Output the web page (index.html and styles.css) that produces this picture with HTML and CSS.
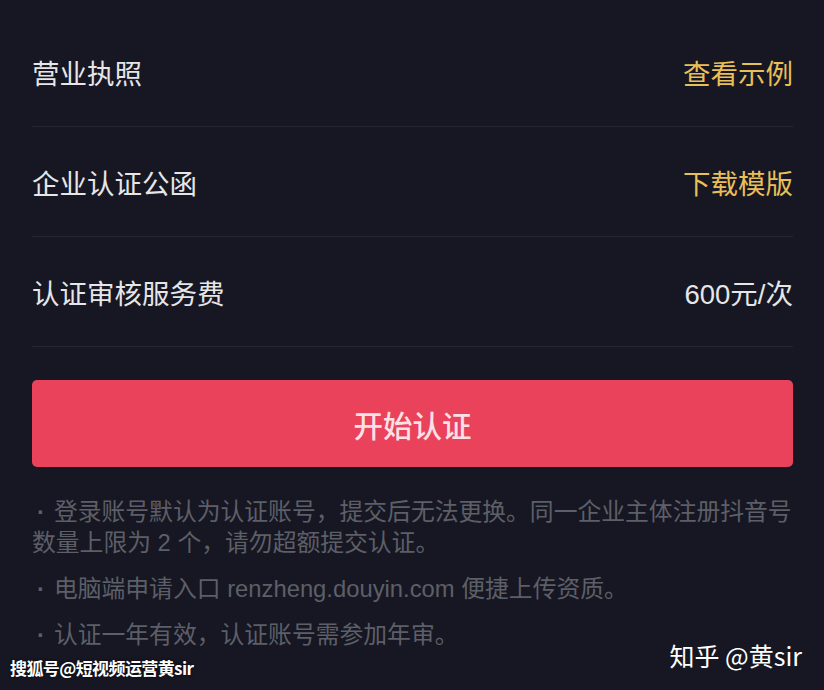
FILE: index.html
```html
<!DOCTYPE html>
<html>
<head>
    <meta charset="utf-8">
    <title>企业认证</title>
    <link rel="stylesheet" href="styles.css">
</head>
<body>
    <div class="page">
        <div class="row">
            <span class="label">营业执照</span>
            <span class="link">查看示例</span>
        </div>
        <div class="row">
            <span class="label">企业认证公函</span>
            <span class="link">下载模版</span>
        </div>
        <div class="row">
            <span class="label">认证审核服务费</span>
            <span class="value">600元/次</span>
        </div>

        <button class="start-btn">开始认证</button>

        <div class="notes">
            <p>登录账号默认为认证账号，提交后无法更换。同一企业主体注册抖音号数量上限为 2 个，请勿超额提交认证。</p>
            <p>电脑端申请入口 renzheng.douyin.com 便捷上传资质。</p>
            <p>认证一年有效，认证账号需参加年审。</p>
        </div>
    </div>

    <div class="mark-left">搜狐号@短视频运营黄sir</div>
    <div class="mark-right">知乎 @黄sir</div>
</body>
</html>
```

FILE: styles.css
```css
* {
    box-sizing: border-box;
    margin: 0;
    padding: 0;
}

body {
    font-family: "Liberation Sans", "Noto Sans CJK SC", sans-serif;
    background-color: #161722;
    color: #e6e6e9;
    width: 824px;
    height: 690px;
    overflow: hidden;
    position: relative;
}

.page {
    padding: 17px 31px 0 32px;
}

.row {
    display: flex;
    justify-content: space-between;
    align-items: center;
    height: 110px;
    border-bottom: 1px solid #24252f;
    font-size: 27.5px;
}

.link {
    color: #e9bf58;
}

.value {
    color: #e6e6e9;
}

.start-btn {
    display: block;
    width: 100%;
    height: 87px;
    margin-top: 33px;
    border: none;
    border-radius: 5px;
    background-color: #e9425a;
    color: #fbe0e5;
    font-family: inherit;
    font-size: 29.5px;
    font-weight: 500;
}

.notes {
    margin-top: 29px;
    color: #5d5f68;
    font-size: 23.8px;
    line-height: 31px;
}

.notes p {
    margin-bottom: 15px;
}

/* 列表圆点 */
.notes p::before {
    content: "·";
    display: inline-block;
    padding-left: 5px;
    margin-right: 9px;
    font-weight: bold;
}

/* 水印 */
.mark-left {
    position: absolute;
    left: 10px;
    bottom: 10px;
    font-family: "Noto Sans CJK SC", sans-serif;
    font-size: 17px;
    letter-spacing: -0.6px;
    font-weight: bold;
    color: #fff;
    text-shadow: 0 0 3px rgba(0,0,0,0.8);
}

.mark-right {
    position: absolute;
    right: 22px;
    bottom: 17px;
    font-family: "Noto Sans CJK SC", sans-serif;
    font-size: 25px;
    color: #fff;
}
```
